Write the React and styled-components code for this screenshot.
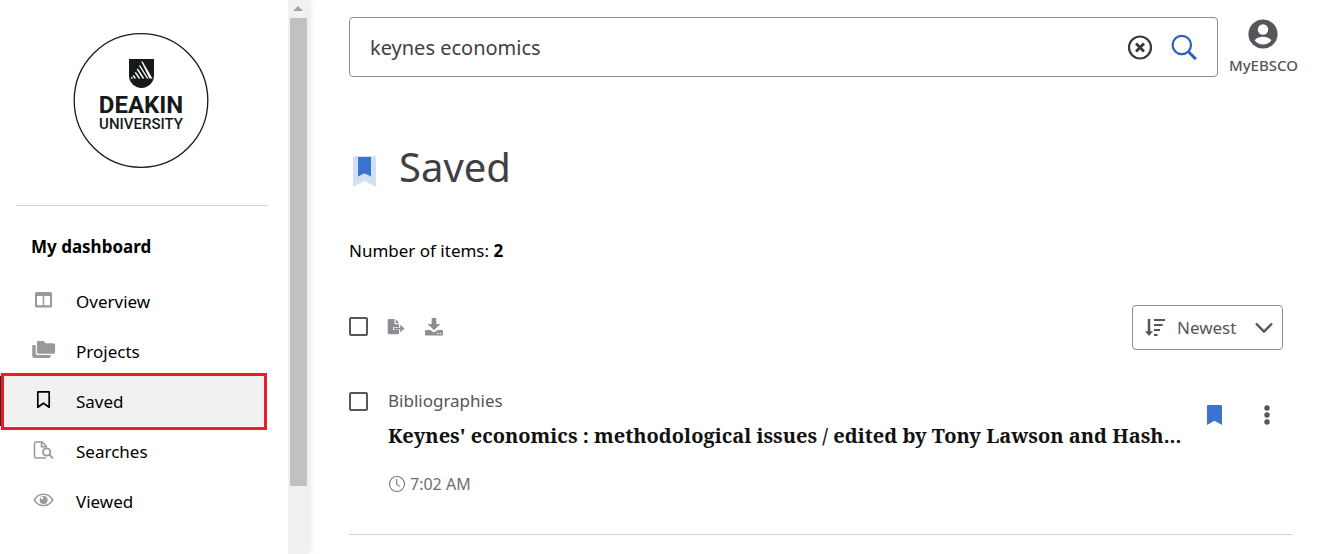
import React from "react";
import styled, { createGlobalStyle, css } from "styled-components";

const GlobalStyle = createGlobalStyle`
  *, *::before, *::after { box-sizing: border-box; }
  body {
    margin: 0;
    background: #fff;
    color: #000;
    font-family: "Noto Sans", "Liberation Sans", sans-serif;
    font-size: 17px;
    line-height: 24px;
  }
  h1, h2, h3, p, ul { margin: 0; padding: 0; }
  button, input, select { font: inherit; color: inherit; }
  svg { display: block; flex: none; }
`;

const Page = styled.div`
  display: flex;
  min-height: 100vh;
`;

const Sidebar = styled.aside`
  display: flex;
  flex: none;
  width: 308px;
  height: 100vh;
  position: sticky;
  top: 0;
  box-shadow: 2px 0 6px rgba(0, 0, 0, 0.1);
`;

const SidebarContent = styled.div`
  flex: 1;
  overflow: hidden;
`;

const LogoArea = styled.div`
  display: flex;
  justify-content: center;
  margin: 0 20px 0 16px;
  padding: 32px 2px 37px 0;
  border-bottom: 1px solid #d3d3d3;
`;

const DashboardTitle = styled.h2`
  padding: 29px 31px 17px;
  font-size: 17px;
  line-height: 24px;
  font-weight: 700;
`;

const NavList = styled.ul`
  list-style: none;
`;

const NavLink = styled.a`
  display: flex;
  align-items: center;
  height: 50px;
  margin-right: 21px;
  padding-left: 31px;
  gap: 20px;
  color: #000;
  text-decoration: none;
  position: relative;

  ${({ $active }) =>
    $active &&
    css`
      background: #f1f1f1;
      box-shadow: inset 2px 0 #2b2b2b;

      &::after {
        content: "";
        position: absolute;
        inset: -3px 0 -4px 1px;
        border: 3px solid #ee1c25;
      }
    `}
`;

const NavLabel = styled.span`
  padding-top: 2px;
`;

const ScrollTrack = styled.div`
  display: flex;
  flex-direction: column;
  align-items: center;
  width: 20px;
  background: #f1f1f1;
`;

const ScrollArrow = styled.div`
  flex: none;
  height: 18px;
  padding-top: 6px;
`;

const ScrollThumb = styled.div`
  width: 17px;
  height: 84.5%;
  background: #c1c1c1;
`;

const Main = styled.main`
  flex: 1;
  min-width: 0;
  padding: 17px 25px 0 41px;
`;

const TopBar = styled.header`
  display: flex;
  align-items: flex-start;
  gap: 11px;
`;

const SearchBox = styled.form`
  display: flex;
  flex: 1;
  align-items: center;
  min-width: 0;
  height: 60px;
  padding: 0 20px;
  gap: 18px;
  border: 1px solid #8b8d90;
  border-radius: 4px;
`;

const SearchInput = styled.input`
  flex: 1;
  min-width: 0;
  padding: 2px 0 0;
  border: 0;
  outline: 0;
  background: none;
  color: #3f4042;
  font-size: 20px;
  line-height: 28px;
`;

const IconButton = styled.button`
  display: flex;
  padding: 0;
  border: 0;
  background: none;
  cursor: pointer;
`;

const AccountButton = styled(IconButton)`
  flex-direction: column;
  align-items: center;
  padding-top: 2px;
  gap: 6px;
  color: #54565a;
  font-size: 15px;
  line-height: 20px;
  font-weight: 500;
`;

const Content = styled.section`
  margin-right: 5px;
`;

const Heading = styled.h1`
  display: flex;
  align-items: center;
  padding-top: 62px;
  gap: 23px;
  color: #3f4042;
  font-size: 40px;
  line-height: 56px;
  font-weight: 400;

  svg { margin: 8px 0 0 4px; }
`;

const ItemCount = styled.p`
  padding-top: 44px;
`;

const Toolbar = styled.div`
  display: flex;
  align-items: center;
  margin: 42px 10px 0 0;
`;

const Tools = styled.div`
  display: flex;
  flex: 1;
  align-items: center;
  padding-bottom: 2px;
  gap: 18px;
`;

const Checkbox = styled.input.attrs({ type: "checkbox" })`
  appearance: none;
  flex: none;
  width: 19px;
  height: 19px;
  margin: 0;
  border: 2px solid #54565a;
  border-radius: 2px;

  &:checked { background: #3b74cf; }
`;

const SortBox = styled.label`
  display: flex;
  align-items: center;
  height: 45px;
  padding: 0 8px 0 11px;
  gap: 11px;
  border: 1px solid #8b8d90;
  border-radius: 4px;
  color: #54565a;
`;

const SortSelect = styled.select`
  appearance: none;
  width: 66px;
  padding: 0;
  border: 0;
  outline: 0;
  background: none;
`;

const Result = styled.article`
  display: flex;
  margin-top: 38px;
  padding-bottom: 38px;
  gap: 20px;
  border-bottom: 1px solid #d3d3d3;

  > input { margin-top: 4px; }
`;

const ResultBody = styled.div`
  flex: 1;
  min-width: 0;
  padding-top: 1px;
`;

const ResultType = styled.p`
  color: #54565a;
`;

const ResultTitle = styled.h3`
  padding: 7px 0 20px;
  overflow: hidden;
  white-space: nowrap;
  text-overflow: ellipsis;
  font-family: "Noto Serif", "DejaVu Serif Condensed", "DejaVu Serif", serif;
  font-size: 20px;
  line-height: 32px;
  font-weight: 700;

  a {
    color: #111;
    text-decoration: none;
  }
`;

const ResultTime = styled.p`
  display: flex;
  align-items: center;
  gap: 4px;
  color: #6d7073;
  font-size: 16px;
  line-height: 24px;
`;

const ResultActions = styled.div`
  display: flex;
  align-items: flex-start;
  padding: 17px 22px 0 0;
  gap: 41px;
`;

function UniversityLogo() {
  return (
    <svg width="136" height="136" viewBox="0 0 136 136" role="img" aria-label="Deakin University">
      <circle cx="68" cy="68.500" r="66.800" fill="#fff" stroke="#161a1a" strokeWidth="1.300" />
      <path d="M56 27h25v16.500a12.500 12.500 0 0 1-25 0Z" fill="#161a1a" />
      <g stroke="#fff" strokeWidth="1.400">
        <path d="M66.500 33.500L74.700 46.500M64.300 37L70.500 46.500M62.300 40.300L66.500 46.500M60.200 43.500L62.300 46.500" />
        <path d="M58 46h1.500" />
      </g>
      <path d="M68.200 29.500l1.400 0l9.900 17h-3Z" fill="#fff" />
      <g fill="#161a1a" textAnchor="middle">
        <text x="68" y="81" fontFamily="Roboto, sans-serif" fontWeight="700" fontSize="24">DEAKIN</text>
        <text x="68" y="97" fontFamily="Roboto, sans-serif" fontWeight="500" fontSize="15">UNIVERSITY</text>
      </g>
    </svg>
  );
}

const OverviewIcon = () => (
  <svg width="25" height="24" viewBox="0 0 25 24">
    <path
      d="M5.500 3h14a1.500 1.500 0 0 1 1.500 1.500v12.500a1.500 1.500 0 0 1-1.500 1.500h-14A1.500 1.500 0 0 1 4 17V4.500A1.500 1.500 0 0 1 5.500 3ZM6 7v9.300h5.700V7ZM13.200 7v9.300H19V7Z"
      fill="#999"
      fillRule="evenodd"
    />
  </svg>
);

const ProjectsIcon = () => (
  <svg width="25" height="24" viewBox="0 0 25 24" fill="#999">
    <path d="M7.500 2h5.200l2 2.200h7.600a1.800 1.800 0 0 1 1.800 1.800v7a1.800 1.800 0 0 1-1.800 1.800H7.700A1.800 1.800 0 0 1 5.900 13V3.600A1.600 1.600 0 0 1 7.500 2Z" />
    <path d="M4.700 6v8a2 2 0 0 0 2 2h13v1.300a1.700 1.700 0 0 1-1.700 1.700H3.200a2 2 0 0 1-2-2V7.300A1.300 1.300 0 0 1 2.500 6Z" />
  </svg>
);

const SavedIcon = () => (
  <svg width="25" height="24" viewBox="0 0 25 24" fill="none" stroke="#000" strokeWidth="1.700">
    <path d="M6.800 2.900h11.400v15.300l-5.700-4-5.700 4Z" strokeLinejoin="round" />
  </svg>
);

const SearchesIcon = () => (
  <svg width="25" height="24" viewBox="0 0 25 24" fill="none" stroke="#999" strokeWidth="1.500">
    <path d="M15 19H5a1.500 1.500 0 0 1-1.500-1.500V4.500A1.500 1.500 0 0 1 5 3h6l4.800 4.800M10.500 3v4.800h5.300" />
    <circle cx="15.600" cy="13" r="3.700" strokeWidth="1.800" />
    <path d="M18.300 15.700L22 19.400" strokeWidth="1.900" />
  </svg>
);

const ViewedIcon = () => (
  <svg width="25" height="24" viewBox="0 0 25 24" fill="none" stroke="#999" strokeWidth="1.600">
    <path d="M3.300 10.900C7.500 3.400 17.500 3.400 21.700 10.900 17.500 18.400 7.500 18.400 3.300 10.900Z" />
    <circle cx="12.600" cy="10.900" r="4" fill="#999" stroke="none" />
    <circle cx="11" cy="9" r="1.300" fill="#fff" stroke="none" />
  </svg>
);

const ClearIcon = () => (
  <svg width="26" height="26" viewBox="0 0 26 26" fill="none" stroke="#37383a">
    <circle cx="13" cy="13.500" r="11" strokeWidth="2.200" />
    <path d="M9 9.500l8 8M17 9.500l-8 8" strokeWidth="2.800" />
  </svg>
);

const SearchIcon = () => (
  <svg width="26" height="26" viewBox="0 0 26 26" fill="none" stroke="#2962b8">
    <circle cx="10.800" cy="11" r="9.200" strokeWidth="2.200" />
    <path d="M17.200 17.500l7.600 7.600" strokeWidth="3" />
  </svg>
);

const AccountIcon = () => (
  <svg width="30" height="30" viewBox="0 0 30 30">
    <circle cx="15" cy="15" r="14.600" fill="#54565a" />
    <circle cx="15" cy="10.500" r="5.200" fill="#fff" />
    <path d="M6.700 21.500c2.500-5 14.100-5 16.600 0-4 5.200-12.600 5.200-16.600 0Z" fill="#fff" />
  </svg>
);

const HeadingIcon = () => (
  <svg width="23" height="31" viewBox="0 0 23 31">
    <path d="M2 0h19a2 2 0 0 1 2 2v29l-11.500-6L0 31V2a2 2 0 0 1 2-2Z" fill="#d3dff5" />
    <path d="M5 1h13v19.500l-6.500-3.300L5 20.500Z" fill="#3b74cf" />
  </svg>
);

const ExportIcon = () => (
  <svg width="20" height="18" viewBox="0 0 20 18" fill="#8b8e92">
    <path d="M3 1h5.500v5.300H13v2.900H7v2.600h6v3.200a1.300 1.300 0 0 1-1.300 1.300H3A1.300 1.300 0 0 1 1.700 15V2.300A1.300 1.300 0 0 1 3 1Z" />
    <path d="M9.600 1l3.600 4.200H9.600Z" />
    <path d="M8 9.800h6.300V6.700l4.200 3.900-4.200 3.900v-3.100H8Z" />
  </svg>
);

const DownloadIcon = () => (
  <svg width="20" height="18" viewBox="0 0 20 18" fill="#8b8e92">
    <path d="M7.700 0h4.600v6h4L10 12.200 3.700 6h4Z" />
    <path d="M2.200 12h4l3.800 2.600 3.800-2.600h4a1.200 1.200 0 0 1 1.200 1.200v3.300a1 1 0 0 1-1 1H2a1 1 0 0 1-1-1v-3.300A1.200 1.200 0 0 1 2.200 12Z" />
    <path d="M13 15.500h1.500M15.700 15.500h1.500" stroke="#fff" strokeWidth="1.200" />
  </svg>
);

const SortIcon = () => (
  <svg width="22" height="20" viewBox="0 0 22 20" fill="none" stroke="#54565a">
    <path d="M5 1v14" strokeWidth="2.500" />
    <path d="M1 13.200h8l-4 4.800Z" fill="#54565a" stroke="none" />
    <path d="M10 2h11M10 7h8.700M10 12h6M10 17h3.500" strokeWidth="2.200" />
  </svg>
);

const ChevronIcon = () => (
  <svg width="20" height="12" viewBox="0 0 20 12" fill="none" stroke="#54565a" strokeWidth="2.400">
    <path d="M2 1.500l8 8 8-8" />
  </svg>
);

const BookmarkIcon = () => (
  <svg width="15" height="20" viewBox="0 0 15 20">
    <path d="M1 0h13a1 1 0 0 1 1 1v19l-7.500-4.300L0 20V1a1 1 0 0 1 1-1Z" fill="#3b74cf" />
  </svg>
);

const MoreIcon = () => (
  <svg width="8" height="20" viewBox="0 0 8 20" fill="#54565a">
    <circle cx="4" cy="3" r="2.700" />
    <circle cx="4" cy="10" r="2.700" />
    <circle cx="4" cy="17" r="2.700" />
  </svg>
);

const ClockIcon = () => (
  <svg width="18" height="18" viewBox="0 0 18 18" fill="none" stroke="#777a7e" strokeWidth="1.100">
    <circle cx="9" cy="9" r="7.500" />
    <path d="M8.700 3.900v5.300l3.100 2.200" />
  </svg>
);

const navItems = [
  { label: "Overview", Icon: OverviewIcon },
  { label: "Projects", Icon: ProjectsIcon },
  { label: "Saved", Icon: SavedIcon, active: true },
  { label: "Searches", Icon: SearchesIcon },
  { label: "Viewed", Icon: ViewedIcon },
];

export default function App() {
  return (
    <>
      <GlobalStyle />
      <Page>
        <Sidebar>
          <SidebarContent>
            <LogoArea>
              <UniversityLogo />
            </LogoArea>
            <DashboardTitle>My dashboard</DashboardTitle>
            <nav aria-label="My dashboard">
              <NavList>
                {navItems.map(({ label, Icon, active }) => (
                  <li key={label}>
                    <NavLink href="#" $active={active} aria-current={active ? "page" : undefined}>
                      <Icon />
                      <NavLabel>{label}</NavLabel>
                    </NavLink>
                  </li>
                ))}
              </NavList>
            </nav>
          </SidebarContent>
          <ScrollTrack aria-hidden="true">
            <ScrollArrow>
              <svg width="10" height="5" viewBox="0 0 10 5">
                <path d="M5 0l5 5H0Z" fill="#a3a3a3" />
              </svg>
            </ScrollArrow>
            <ScrollThumb />
          </ScrollTrack>
        </Sidebar>
        <Main>
          <TopBar>
            <SearchBox role="search" onSubmit={(e) => e.preventDefault()}>
              <SearchInput aria-label="Search" defaultValue="keynes economics" />
              <IconButton type="reset" aria-label="Clear search"><ClearIcon /></IconButton>
              <IconButton type="submit" aria-label="Search"><SearchIcon /></IconButton>
            </SearchBox>
            <AccountButton type="button">
              <AccountIcon />
              MyEBSCO
            </AccountButton>
          </TopBar>
          <Content>
            <Heading><HeadingIcon />Saved</Heading>
            <ItemCount>Number of items: <strong>2</strong></ItemCount>
            <Toolbar>
              <Tools>
                <Checkbox aria-label="Select all" />
                <IconButton type="button" aria-label="Export"><ExportIcon /></IconButton>
                <IconButton type="button" aria-label="Download"><DownloadIcon /></IconButton>
              </Tools>
              <SortBox>
                <SortIcon />
                <SortSelect aria-label="Sort by" defaultValue="Newest">
                  <option>Newest</option>
                </SortSelect>
                <ChevronIcon />
              </SortBox>
            </Toolbar>
            <Result>
              <Checkbox aria-label="Select item" />
              <ResultBody>
                <ResultType>Bibliographies</ResultType>
                <ResultTitle>
                  <a href="#">Keynes' economics : methodological issues / edited by Tony Lawson and Hash...</a>
                </ResultTitle>
                <ResultTime><ClockIcon />7:02 AM</ResultTime>
              </ResultBody>
              <ResultActions>
                <IconButton type="button" aria-label="Remove from saved"><BookmarkIcon /></IconButton>
                <IconButton type="button" aria-label="More options"><MoreIcon /></IconButton>
              </ResultActions>
            </Result>
          </Content>
        </Main>
      </Page>
    </>
  );
}
